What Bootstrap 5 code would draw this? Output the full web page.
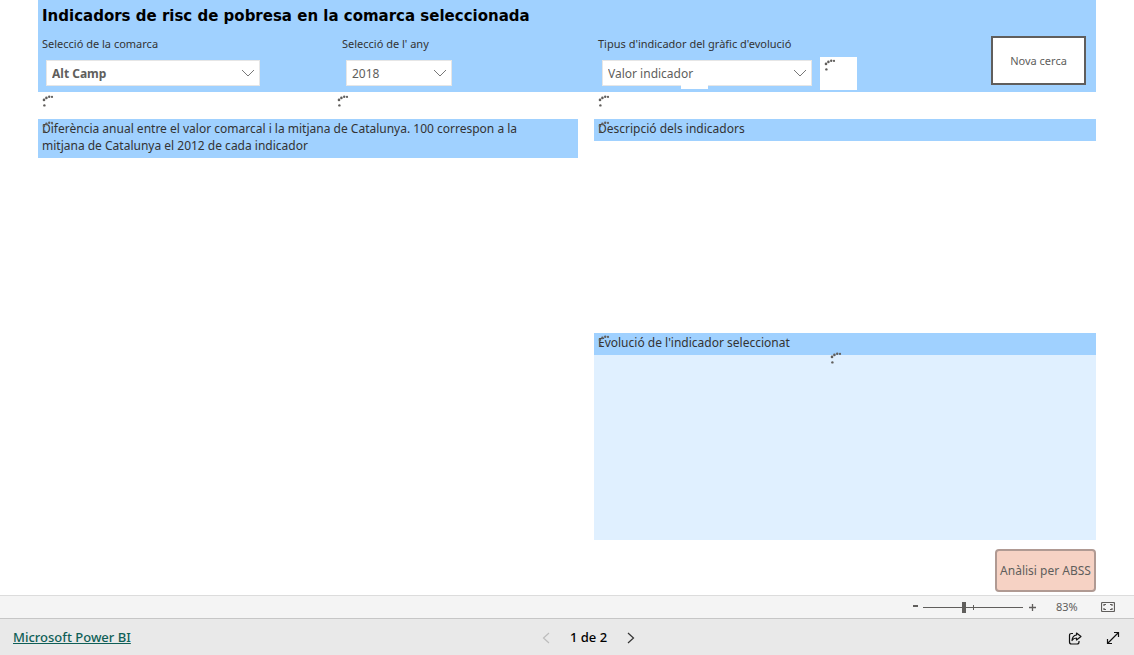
<!DOCTYPE html>
<html lang="ca">
<head>
<meta charset="utf-8">
<meta name="viewport" content="width=device-width, initial-scale=1">
<title>Indicadors de risc de pobresa</title>
<link href="https://cdn.jsdelivr.net/npm/bootstrap@5.3.0/dist/css/bootstrap.min.css" rel="stylesheet">
<style>
  body { font-family: "Noto Sans", "Open Sans", sans-serif; font-size: 12px; color: #252423; background: #fff; }
  .report { padding: 0 38px; }
  .split { display: grid; grid-template-columns: 556fr 502fr; }
  .pair { display: grid; grid-template-columns: 300fr 256fr; }
  .top-band { background: #a0d1ff; height: 92px; }
  .report-title { font: bold 15px/20px "DejaVu Sans", sans-serif; color: #000; padding: 6px 4px 0; height: 34px; margin: 0; }
  .field-label { font-size: 11px; line-height: 20px; padding-left: 4px; margin-bottom: 6px; display: block; color: #333; }
  .slicer { appearance: none; height: 26px; margin-left: 8px; padding: 2px 28px 0 5px; border: 1px solid #e6e6e6; border-radius: 0; color: #605e5c; font-size: 12px; line-height: 22px; display: block;
    background: #fff url("data:image/svg+xml,%3Csvg xmlns='http://www.w3.org/2000/svg' width='14' height='8'%3E%3Cpath d='M1 1l6 6 6-6' fill='none' stroke='%23777' stroke-width='1'/%3E%3C/svg%3E") no-repeat right 4px center; }
  .slicer-comarca { width: 214px; font-weight: 700; }
  .slicer-any { width: 106px; }
  .slicer-tipus { width: 210px; }
  .stub { left: 87px; top: 50px; width: 27px; height: 5px; background: #fff; }
  .loading-box { width: 37px; height: 33px; background: #fff; margin: 23px 0 0 8px; padding: 2px 4px; line-height: 0; }
  .btn-nova { width: 95px; height: 49px; margin: 2px 10px 0 0; border: 2px solid #605e5c; border-radius: 0; background: #fff; color: #605e5c; font-size: 11px; padding: 2px 0 0; }
  .btn-nova:hover { background: #f3f3f3; border-color: #605e5c; }
  .spin { width: 12px; height: 12px; display: block; fill: #605e5c; }
  .loading-row { height: 27px; }
  .loading-row .pair { grid-template-columns: 295fr 261fr; }
  .loading-row .spin { margin: 3px 0 0 4px; }
  .panel-title { background: #a0d1ff; font-size: 12px; line-height: 17px; font-weight: 400; margin: 0; padding: 1px 24px 4px 4px; position: relative; color: #333; }
  .panel-title .spin { position: absolute; left: 4px; top: 2px; }
  .panel-left { margin-right: 16px; }
  .panel-desc { height: 214px; }
  .panel-evo { height: 207px; background: #e0f0ff; }
  .panel-evo > .spin { margin: -3px 0 0 47%; position: relative; }
  .btn-abss { width: 101px; height: 43px; margin: 9px 0 3px; border: 2px solid #b09a93; border-radius: 4px; background: #f6d2c4; color: #605e5c; font-size: 12px; padding: 0; white-space: nowrap; }
  .btn-abss:hover { background: #f1c5b4; border-color: #b09a93; }
  .zoom-bar { height: 23px; background: #f4f4f4; border-top: 1px solid #dcdcdc; color: #605e5c; padding-right: 19px; }
  .zoom-bar button, .foot button { border: 0; background: none; padding: 0; color: inherit; display: block; line-height: 0; }
  .zoom-range { appearance: none; width: 100px; height: 12px; margin: 0 6px 0 5px;
    background: linear-gradient(#605e5c, #605e5c) 50px 4px / 1px 5px no-repeat, linear-gradient(#605e5c, #605e5c) 0 6px / 100% 1px no-repeat; }
  .zoom-range::-webkit-slider-thumb { appearance: none; width: 4px; height: 11px; background: #605e5c; border: 0; border-radius: 0; }
  .zoom-range::-moz-range-thumb { width: 4px; height: 11px; background: #605e5c; border: 0; border-radius: 0; }
  .zoom-value { width: 24px; margin: 0 21px 0 20px; font-size: 11px; }
  .foot { display: grid; grid-template-columns: 12fr auto 11fr; height: 37px; background: #e9e9e9; border-top: 1px solid #c6c6c6; padding: 2px 14px 0 13px; font-size: 13px; color: #000; }
  .foot a { color: #0f5f57; font-weight: 500; }
  .page-no { font-size: 13px; font-weight: 500; margin: 0 20px; }
</style>
</head>
<body class="min-vh-100 d-flex flex-column">
<svg width="0" height="0" class="position-absolute" aria-hidden="true">
  <symbol id="dots" viewBox="0 0 12 12">
    <circle cx="2.4" cy="10.400" r="1.200"/><circle cx="2" cy="4.900" r="1.300"/><circle cx="4.400" cy="2.900" r="1.300"/><circle cx="7.200" cy="1.800" r="1.200"/><circle cx="10" cy="1.900" r="1.100"/>
  </symbol>
</svg>
<main class="report flex-grow-1">
  <header class="top-band">
    <h1 class="report-title">Indicadors de risc de pobresa en la comarca seleccionada</h1>
    <div class="split">
      <div class="pair">
        <div>
          <label class="field-label" for="comarca">Selecció de la comarca</label>
          <select class="slicer slicer-comarca" id="comarca"><option>Alt Camp</option></select>
        </div>
        <div>
          <label class="field-label" for="any">Selecció de l' any</label>
          <select class="slicer slicer-any" id="any"><option>2018</option></select>
        </div>
      </div>
      <div class="d-flex align-items-start">
        <div class="position-relative">
          <label class="field-label" for="tipus">Tipus d'indicador del gràfic d'evolució</label>
          <select class="slicer slicer-tipus" id="tipus"><option>Valor indicador</option></select>
          <span class="stub position-absolute"></span>
        </div>
        <div class="loading-box"><svg class="spin"><use href="#dots"/></svg></div>
        <button type="button" class="btn btn-nova ms-auto">Nova cerca</button>
      </div>
    </div>
  </header>
  <div class="split loading-row">
    <div class="pair">
      <svg class="spin"><use href="#dots"/></svg>
      <svg class="spin"><use href="#dots"/></svg>
    </div>
    <svg class="spin"><use href="#dots"/></svg>
  </div>
  <div class="split">
    <section class="panel-left">
      <h2 class="panel-title">Diferència anual entre el valor comarcal i la mitjana de Catalunya. 100 correspon a la mitjana de Catalunya el 2012 de cada indicador<svg class="spin"><use href="#dots"/></svg></h2>
    </section>
    <div>
      <section class="panel-desc">
        <h2 class="panel-title">Descripció dels indicadors<svg class="spin"><use href="#dots"/></svg></h2>
      </section>
      <section class="panel-evo">
        <h2 class="panel-title">Evolució de l'indicador seleccionat<svg class="spin"><use href="#dots"/></svg></h2>
        <svg class="spin"><use href="#dots"/></svg>
      </section>
      <div class="text-end"><button type="button" class="btn btn-abss">Anàlisi per ABSS</button></div>
    </div>
  </div>
</main>
<div class="zoom-bar d-flex align-items-center justify-content-end">
  <button type="button" aria-label="Redueix"><svg width="5" height="10" stroke="currentColor" stroke-width="2"><path d="M0 4h5"/></svg></button>
  <input type="range" class="zoom-range" min="0" max="100" value="41" aria-label="Zoom">
  <button type="button" aria-label="Amplia"><svg width="7" height="9" stroke="currentColor" stroke-width="1.300"><path d="M0 4.500h7M3.500 1v7"/></svg></button>
  <span class="zoom-value">83%</span>
  <button type="button" aria-label="Ajusta a la pàgina"><svg width="14" height="10" viewBox="0 0 14 10" fill="none" stroke="currentColor"><rect x=".5" y=".5" width="13" height="9" rx="1" stroke-width="1.200"/><path d="M5 2.500H3v1.500M3 6v1.500h2M9 2.500h2v1.500M11 6v1.500H9" stroke-width="1.200"/></svg></button>
</div>
<footer class="foot align-items-center">
  <div><a href="#">Microsoft Power BI</a></div>
  <div class="d-flex align-items-center">
    <button type="button" aria-label="Pàgina anterior" disabled><svg width="8" height="12" fill="none" stroke="#bdbdbd" stroke-width="1.200"><path d="M7 1L1.500 6 7 11"/></svg></button>
    <span class="page-no">1 de 2</span>
    <button type="button" aria-label="Pàgina següent"><svg width="8" height="12" fill="none" stroke="#333" stroke-width="1.200"><path d="M1 1l5.500 5L1 11"/></svg></button>
  </div>
  <div class="d-flex justify-content-end align-items-center gap-4">
    <button type="button" aria-label="Comparteix"><svg width="14" height="13" viewBox="0 0 14 13" fill="none" stroke="#111" stroke-width="1.200"><path d="M5 1.500H3.500q-2 0-2 2V10q0 2 2 2H9q2 0 2-2V9"/><path d="M8.500 1L13 4.500 8.500 8V6Q5.500 6 4 8.500 4.500 3.500 8.500 3z" stroke-linejoin="round"/></svg></button>
    <button type="button" aria-label="Pantalla completa"><svg width="14" height="14" fill="none" stroke="#111" stroke-width="1.200"><path d="M1.500 12.500l11-11M8 1.500h4.500V6M1.500 8v4.500H6"/></svg></button>
  </div>
</footer>
<script src="https://cdn.jsdelivr.net/npm/bootstrap@5.3.0/dist/js/bootstrap.bundle.min.js"></script>
</body>
</html>
